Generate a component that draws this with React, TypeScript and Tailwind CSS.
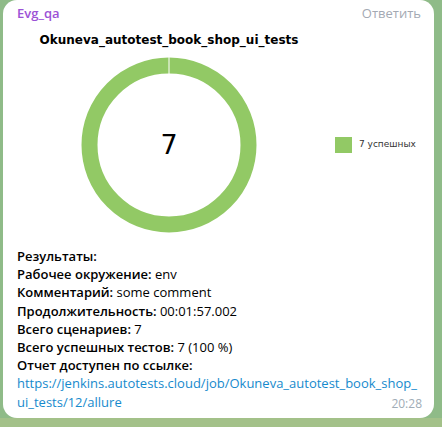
import React from 'react'

export default function App() {
  return (
    <div className="w-[442px] h-[427px] overflow-hidden bg-[#8fbb88] relative" style={{ fontFamily: '"Open Sans", sans-serif' }}>
      <div className="flex h-[418px] pl-[3px]">
        <div className="w-[431px] h-[418px] bg-white rounded-[14px] flex flex-col">
          {/* header */}
          <div className="flex justify-between items-center px-[14px] pt-[3px] h-[24px]">
            <span className="text-[13px] font-semibold text-[#9c52d6]">Evg_qa</span>
            <span className="text-[13px] text-[#a3a9b3] mr-[-1px]">Ответить</span>
          </div>
          {/* chart image */}
          <div className="flex h-[216px]">
            <div className="w-[332px] flex flex-col items-center">
              <div className="mt-[8px] text-[12px] font-bold text-black leading-[16px]" style={{ fontFamily: '"DejaVu Sans", sans-serif' }}>
                Okuneva_autotest_book_shop_ui_tests
              </div>
              <div className="relative mt-[9px] w-[176px] h-[176px]">
                <svg width="176" height="176" viewBox="0 0 176 176" className="absolute inset-0">
                  <circle cx="88" cy="88" r="79.5" fill="none" stroke="#92c965" strokeWidth="16" />
                  <line x1="88" y1="0" x2="88" y2="17" stroke="#ffffff" strokeWidth="1" />
                </svg>
                <div className="absolute inset-0 flex items-center justify-center text-[27px] text-black" style={{ fontFamily: '"DejaVu Sans", sans-serif' }}>
                  7
                </div>
              </div>
            </div>
            <div className="flex items-center gap-[7px] mt-[113px] self-start h-[16px]">
              <div className="w-[17px] h-[16px] bg-[#92c965]" />
              <span className="text-[9px] text-[#333]" style={{ fontFamily: '"DejaVu Sans", sans-serif' }}>7 успешных</span>
            </div>
          </div>
          {/* text */}
          <div className="px-[14px] pt-[7px] text-[13px] leading-[18.2px] text-black">
            <div><b className="font-semibold">Результаты:</b></div>
            <div><b className="font-semibold">Рабочее окружение:</b> env</div>
            <div><b className="font-semibold">Комментарий:</b> some comment</div>
            <div><b className="font-semibold">Продолжительность:</b> 00:01:57.002</div>
            <div><b className="font-semibold">Всего сценариев:</b> 7</div>
            <div><b className="font-semibold">Всего успешных тестов:</b> 7 (100 %)</div>
            <div><b className="font-semibold">Отчет доступен по ссылке:</b></div>
            <div className="text-[#168acd] whitespace-nowrap">https://jenkins.autotests.cloud/job/Okuneva_autotest_book_shop_</div>
            <div className="flex justify-between items-end">
              <span className="text-[#168acd]">ui_tests/12/allure</span>
              <span className="text-[12px] leading-[14px] text-[#a0acb6] mr-[-2px] mb-[0px]">20:28</span>
            </div>
          </div>
        </div>
      </div>
      <div className="h-[9px] bg-[#a3c189]" />
    </div>
  )
}
